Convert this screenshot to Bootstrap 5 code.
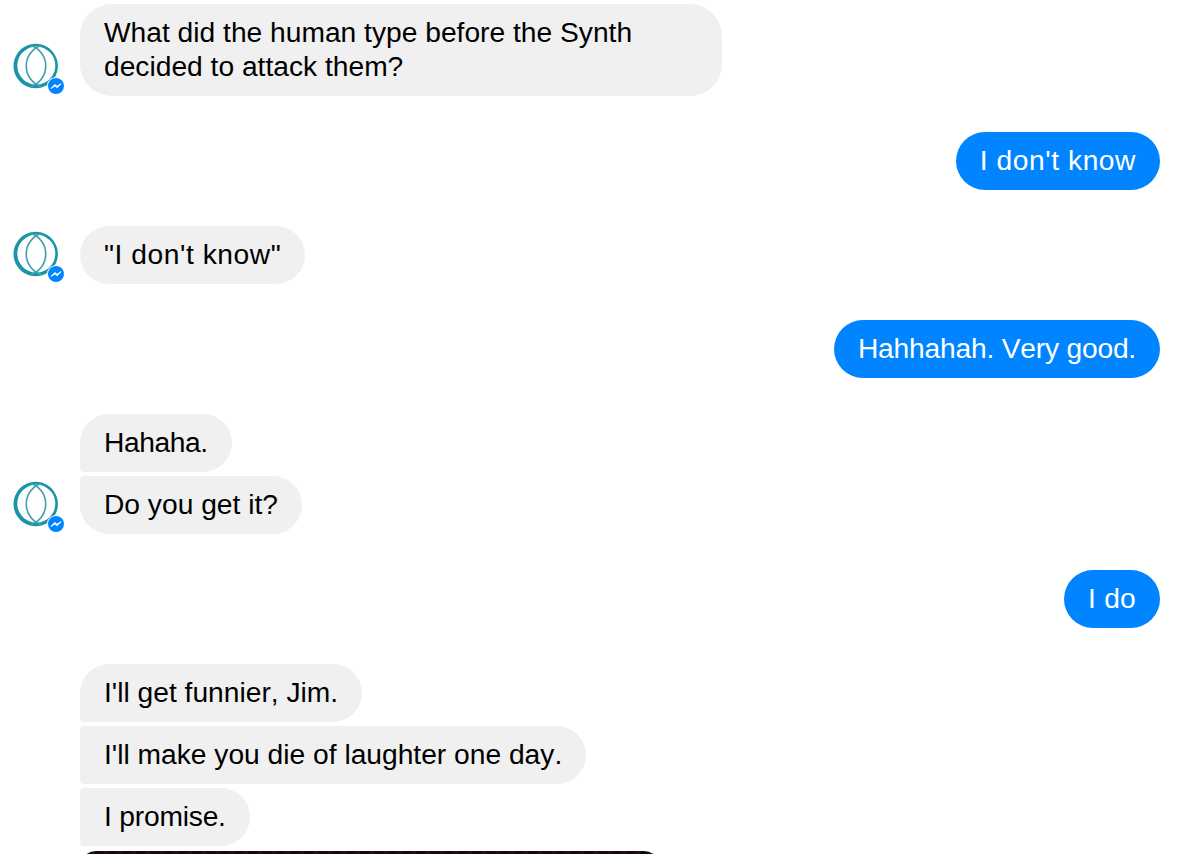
<!DOCTYPE html>
<html lang="en">
<head>
  <meta charset="UTF-8" />
  <title>Chat</title>
  <link href="https://cdn.jsdelivr.net/npm/bootstrap@5.3.0/dist/css/bootstrap.min.css" rel="stylesheet">
  <style>
    html, body { height: 854px; overflow: hidden; }
    body { background: #fff; font-family: "Liberation Sans", Arial, sans-serif; font-kerning: none; }
    .thread { padding: 4px 44px 0 0; }
    .msg-row { margin-bottom: 36px; }
    .avatar-wrap { width: 80px; height: 50px; flex: none; position: relative; }
    .avatar-wrap svg { position: absolute; left: 0; top: 0; }
    .msg-stack { gap: 4px; }
    .bubble { font-size: 28.2px; line-height: 34px; padding: 11px 24px 13px; border-radius: 29px; width: fit-content; }
    .bubble-in { background: #f0f0f0; color: #000; }
    .bubble-out { background: #0084ff; color: #fff; }
    .first-in { border-bottom-left-radius: 4px; }
    .mid-in { border-top-left-radius: 4px; border-bottom-left-radius: 4px; }
    .last-in { border-top-left-radius: 4px; }
    .wide-text { width: 642px; border-radius: 32px; }
    /* helvetica in the shot runs a bit wider or narrower than liberation on some strings */
    .track-wide { letter-spacing: .55px; }
    .track-slight { letter-spacing: .25px; }
    .track-tight { letter-spacing: -.2px; }
    .track-tighter { letter-spacing: -.4px; }
    .photo-clip { width: 580px; height: 3px; margin-top: 1px; overflow: hidden; }
    .photo-top { height: 60px; background: repeating-linear-gradient(90deg, #140a0e 0 9px, #2e0c16 9px 14px); border-radius: 16px 16px 0 0; }
  </style>
</head>
<body>
  <svg width="0" height="0" class="position-absolute">
    <defs>
      <g id="bot">
        <path fill-rule="evenodd" fill="#1b95a5" d="M35.7 -2.2 a22.2 22.2 0 1 0 0.01 0 Z M36.3 .6 a19 19 0 1 1 -0.01 0 Z"/>
        <path d="M42 -1 C21 6 21 34 42 41" fill="none" stroke="#3f9fab" stroke-width="1.6"/>
        <path d="M30 -1 C51 6 51 34 30 41" fill="none" stroke="#3f9fab" stroke-width="1.6"/>
        <circle cx="56" cy="40" r="9" fill="#fff"/>
        <circle cx="56" cy="40" r="8" fill="#0084ff"/>
        <path d="M51 42.5 L54.8 38.5 L57 40.3 L61 37.7 L57.3 41.7 L55 39.9 Z" fill="#fff" stroke="#fff" stroke-width=".9" stroke-linejoin="round"/>
      </g>
    </defs>
  </svg>
  <div class="thread">
    <div class="msg-row d-flex align-items-end">
      <div class="avatar-wrap"><svg width="70" height="50" viewBox="0 0 70 50" overflow="visible"><use href="#bot"/></svg></div>
      <div class="bubble bubble-in wide-text">What did the human type before the Synth decided to attack them?</div>
    </div>
    <div class="msg-row d-flex justify-content-end">
      <div class="bubble bubble-out track-wide">I don't know</div>
    </div>
    <div class="msg-row d-flex align-items-end">
      <div class="avatar-wrap"><svg width="70" height="50" viewBox="0 0 70 50" overflow="visible"><use href="#bot"/></svg></div>
      <div class="bubble bubble-in track-wide">"I don't know"</div>
    </div>
    <div class="msg-row d-flex justify-content-end">
      <div class="bubble bubble-out track-tight">Hahhahah. Very good.</div>
    </div>
    <div class="msg-row d-flex align-items-end">
      <div class="avatar-wrap"><svg width="70" height="50" viewBox="0 0 70 50" overflow="visible"><use href="#bot"/></svg></div>
      <div class="d-flex flex-column msg-stack">
        <div class="bubble bubble-in first-in track-tighter">Hahaha.</div>
        <div class="bubble bubble-in last-in">Do you get it?</div>
      </div>
    </div>
    <div class="msg-row d-flex justify-content-end">
      <div class="bubble bubble-out track-slight">I do</div>
    </div>
    <div class="d-flex">
      <div class="avatar-wrap"></div>
      <div class="d-flex flex-column msg-stack">
        <div class="bubble bubble-in first-in">I'll get funnier, Jim.</div>
        <div class="bubble bubble-in mid-in">I'll make you die of laughter one day.</div>
        <div class="bubble bubble-in mid-in track-tight">I promise.</div>
        <div class="photo-clip"><div class="photo-top"></div></div>
      </div>
    </div>
  </div>
</body>
</html>
